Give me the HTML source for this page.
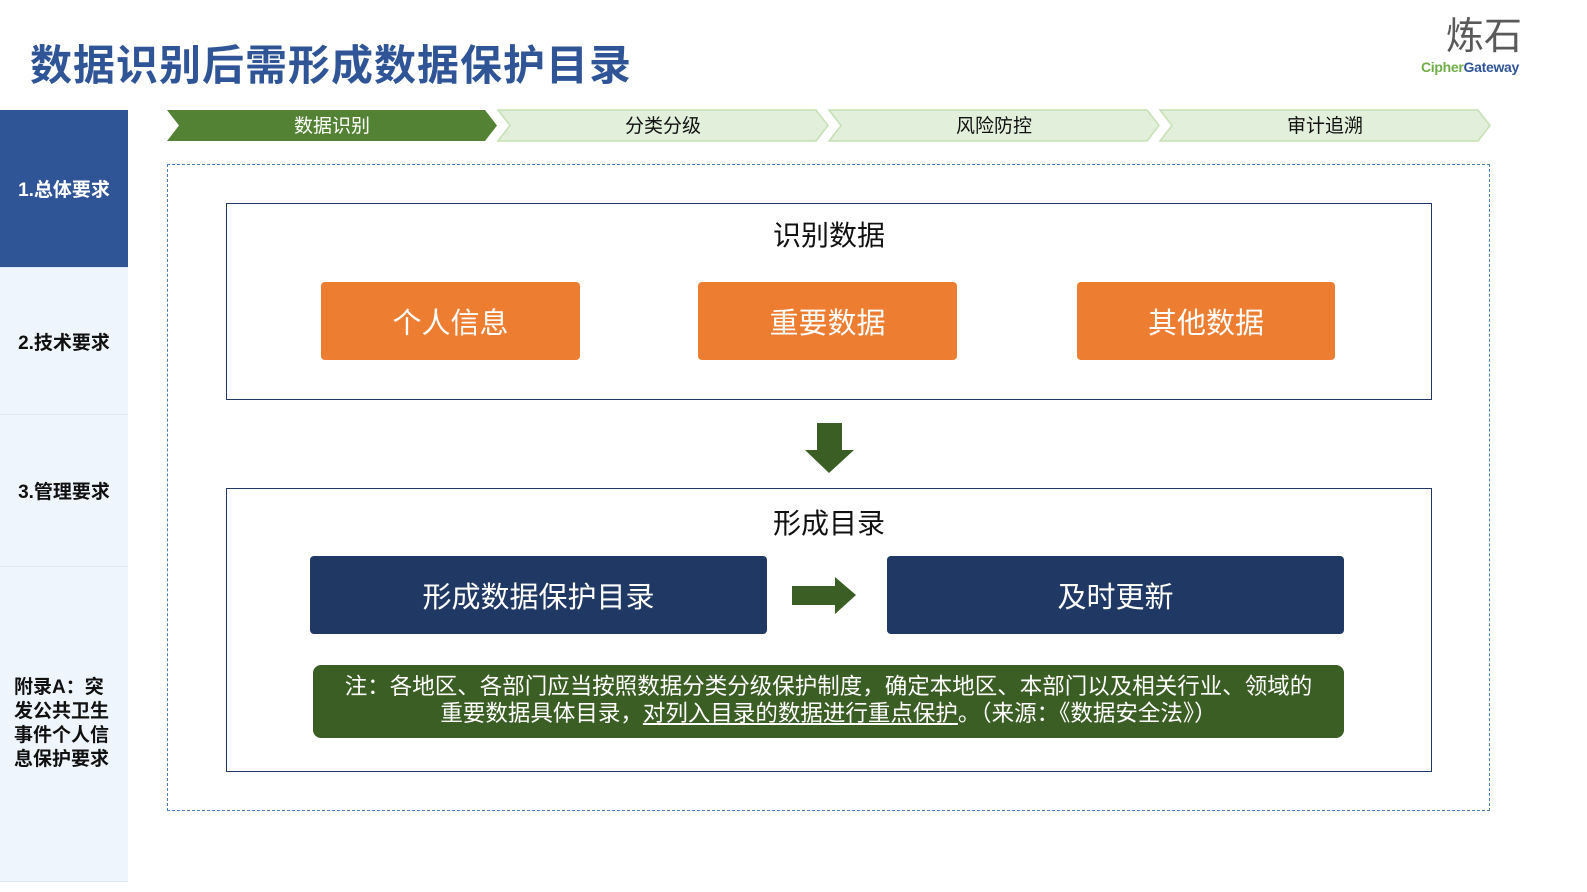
<!DOCTYPE html>
<html><head><meta charset="utf-8"><style>
*{margin:0;padding:0;box-sizing:border-box}
body{width:1587px;height:892px;background:#fff;position:relative;overflow:hidden;font-family:"Liberation Sans","Noto Sans CJK SC",sans-serif}
.a{position:absolute}
.title{left:30px;top:32px;font-size:42px;font-weight:bold;color:#2f5597;letter-spacing:1px}
.side{left:0;width:128px;background:#eef5fd;display:flex;align-items:center;justify-content:center;font-weight:bold;font-size:19px;color:#111;border-bottom:1px solid #dde8f3}
.btn{display:flex;align-items:center;justify-content:center;color:#fff;font-size:29px;border-radius:4px}
.box{border:1.5px solid #1f3864;left:226px;width:1206px}
.ct{font-size:28px;color:#111;width:100%;text-align:center}
</style></head><body>
<div class="a title">数据识别后需形成数据保护目录</div>
<div class="a" style="left:1446px;top:14px;font-size:38px;color:#595959;letter-spacing:0px;line-height:46px">炼石</div>
<div class="a" style="left:1421px;top:59px;font-size:14px;font-weight:bold;letter-spacing:-0.3px"><span style="color:#70ad47">Cipher</span><span style="color:#2f5597">Gateway</span></div>

<div class="a side" style="top:110px;height:158px;background:#2f5597;color:#fff">1.总体要求</div>
<div class="a side" style="top:268px;height:147px">2.技术要求</div>
<div class="a side" style="top:415px;height:152px">3.管理要求</div>
<div class="a side" style="top:567px;height:315px;line-height:24px;padding:0 14px;text-align:left">附录A：突发公共卫生事件个人信息保护要求</div>

<svg class="a" style="left:160px;top:105px" width="1340" height="42">
<polygon points="7,5 325,5 337,20.5 325,36 7,36 19,20.5" fill="#548235"/>
<polygon points="338,5 656,5 668,20.5 656,36 338,36 350,20.5" fill="#e2efda" stroke="#c5e0b4" stroke-width="1.5"/>
<polygon points="669,5 987,5 999,20.5 987,36 669,36 681,20.5" fill="#e2efda" stroke="#c5e0b4" stroke-width="1.5"/>
<polygon points="1000,5 1318,5 1330,20.5 1318,36 1000,36 1012,20.5" fill="#e2efda" stroke="#c5e0b4" stroke-width="1.5"/>
<g font-size="19" text-anchor="middle" font-family="Liberation Sans,Noto Sans CJK SC,sans-serif">
<text x="172" y="27" fill="#fff">数据识别</text>
<text x="503" y="27" fill="#111">分类分级</text>
<text x="834" y="27" fill="#111">风险防控</text>
<text x="1165" y="27" fill="#111">审计追溯</text></g>
</svg>

<div class="a" style="left:167px;top:164px;width:1323px;height:647px;border:1.5px dashed #4a7ebb"></div>

<div class="a box" style="top:203px;height:197px"></div>
<div class="a ct" style="left:226px;width:1206px;top:214px">识别数据</div>
<div class="a btn" style="left:321px;top:282px;width:259px;height:78px;background:#ed7d31">个人信息</div>
<div class="a btn" style="left:698px;top:282px;width:259px;height:78px;background:#ed7d31">重要数据</div>
<div class="a btn" style="left:1077px;top:282px;width:258px;height:78px;background:#ed7d31">其他数据</div>

<svg class="a" style="left:800px;top:418px" width="60" height="56"><polygon points="25,5 50,5 50,32 62,32 37,55 13,32 25,32" fill="#3b5e24" transform="translate(-8,0)"/></svg>

<div class="a box" style="top:488px;height:284px"></div>
<div class="a ct" style="left:226px;width:1206px;top:502px">形成目录</div>
<div class="a btn" style="left:310px;top:556px;width:457px;height:78px;background:#203864">形成数据保护目录</div>
<div class="a btn" style="left:887px;top:556px;width:457px;height:78px;background:#203864">及时更新</div>
<svg class="a" style="left:790px;top:575px" width="70" height="42"><polygon points="2,11 45,11 45,2 66,20 45,39 45,30 2,30" fill="#3b5e24"/></svg>
<div class="a" style="left:313px;top:665px;width:1031px;height:73px;background:#3b5e24;border-radius:8px;color:#fff;font-size:22.5px;line-height:27px;text-align:center;padding-top:8px;white-space:nowrap">注：各地区、各部门应当按照数据分类分级保护制度，确定本地区、本部门以及相关行业、领域的<br>重要数据具体目录，<u>对列入目录的数据进行重点保护</u>。（来源：《数据安全法》）</div>
</body></html>
